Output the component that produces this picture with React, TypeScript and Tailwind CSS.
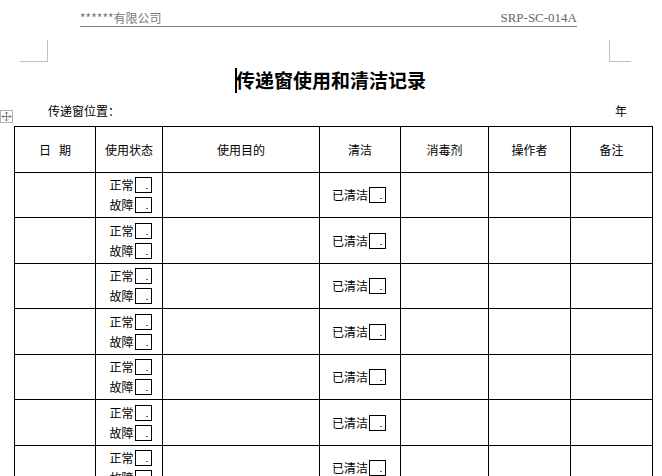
import React from "react";

const cjk = { fontFamily: '"Noto Sans CJK SC", "Noto Sans", sans-serif' };

const Box = () => (
    <span className="relative inline-block w-[17px] h-[16px] border border-black align-middle ml-[1px]">
        <span className="absolute right-[3px] bottom-[3px] w-[2px] h-[1px] bg-[#3a6fb0]" />
    </span>
);

const headers = ["日\u00a0\u00a0\u00a0期", "使用状态", "使用目的", "清洁", "消毒剂", "操作者", "备注"];
const widths = ["w-[81px]", "w-[67px]", "w-[157px]", "w-[81px]", "w-[88px]", "w-[82px]", "w-[82px]"];
const rows = [45, 46, 45, 46, 45, 46, 45];

export default function App() {
    return (
        <div className="relative w-[662px] h-[476px] overflow-hidden bg-white text-black" style={cjk}>
            {/* page header */}
            <div className="ml-[80px] mt-[9px] w-[497px] h-[18px] flex items-end justify-between border-b border-[#808080]">
                <span className="text-[12px] leading-[16px] text-[#777]">******有限公司</span>
                <span className="text-[13px] leading-[16px] text-[#666]" style={{ fontFamily: '"Liberation Serif", serif' }}>SRP-SC-014A</span>
            </div>

            {/* margin marks */}
            <div className="mt-[13px] flex justify-between h-[22px]">
                <div className="ml-[20px] w-[28px] h-[22px] border-r border-b border-[#c0c0c0]" />
                <div className="mr-[31px] w-[22px] h-[22px] border-l border-b border-[#c0c0c0]" />
            </div>

            {/* title */}
            <div className="mt-[6px] flex justify-center">
                <h1 className="relative text-[19px] leading-[24px] font-bold">
                    <span className="absolute left-[-1px] top-[0px] w-[2px] h-[25px] bg-black" />
                    传递窗使用和清洁记录
                </h1>
            </div>

            {/* sub header line */}
            <div className="mt-[11px] flex justify-between text-[12px] leading-[16px] pl-[48px] pr-[35px]">
                <span>传递窗位置：</span>
                <span>年</span>
            </div>

            {/* move handle */}
            <div className="absolute left-[0px] top-[110px] w-[13px] h-[13px] border border-[#b0b0b0] bg-white flex items-center justify-center">
                <svg width="11" height="11" viewBox="0 0 11 11" fill="none" stroke="#808080" strokeWidth="1">
                    <path d="M5.5 1v9M1 5.5h9M4 2.5l1.5-1.5 1.5 1.5M4 8.5l1.5 1.5 1.5-1.5M2.5 4L1 5.5l1.5 1.5M8.5 4L10 5.5 8.5 7" />
                </svg>
            </div>

            <table className="ml-[14px] mt-[7px] border-collapse table-fixed text-[12px]">
                <thead>
                    <tr className="h-[46px]">
                        {headers.map((h, i) => (
                            <th key={i} className={`${widths[i]} border border-black font-normal text-center p-0`}>{h}</th>
                        ))}
                    </tr>
                </thead>
                <tbody>
                    {rows.map((h, r) => (
                        <tr key={r} style={{ height: h }}>
                            <td className="border border-black" />
                            <td className="border border-black p-0">
                                <div className="flex flex-col items-center leading-[20px] pl-[3px]">
                                    <div className="flex items-center"><span>正常</span><Box /></div>
                                    <div className="flex items-center"><span>故障</span><Box /></div>
                                </div>
                            </td>
                            <td className="border border-black" />
                            <td className="border border-black p-0">
                                <div className="flex items-center justify-center pr-[2px]"><span>已清洁</span><Box /></div>
                            </td>
                            <td className="border border-black" />
                            <td className="border border-black" />
                            <td className="border border-black" />
                        </tr>
                    ))}
                </tbody>
            </table>
        </div>
    );
}
